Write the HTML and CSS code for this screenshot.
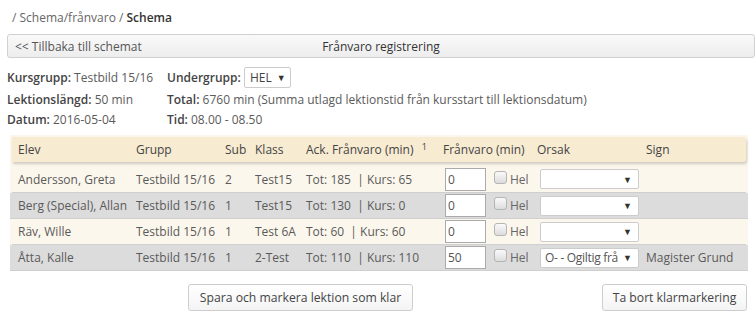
FILE: index.html
```html
<!DOCTYPE html>
<html lang="sv">
<head>
<meta charset="utf-8">
<link rel="stylesheet" href="styles.css">
</head>
<body>
<div class="crumbs">/ Schema/frånvaro / <b>Schema</b></div>
<div class="titlebar">
  <a class="back">&lt;&lt; Tillbaka till schemat</a>
  <span class="title">Frånvaro registrering</span>
</div>
<div class="info">
  <div class="col left">
    <div class="line first"><b>Kursgrupp:</b> Testbild 15/16</div>
    <div class="line"><b>Lektionslängd:</b> 50 min</div>
    <div class="line"><b>Datum:</b> 2016-05-04</div>
  </div>
  <div class="col right">
    <div class="line first"><b>Undergrupp:</b> <span class="sel small">HEL <i class="arr">▼</i></span></div>
    <div class="line"><b>Total:</b> 6760 min (Summa utlagd lektionstid från kursstart till lektionsdatum)</div>
    <div class="line"><b>Tid:</b> 08.00 - 08.50</div>
  </div>
</div>
<div class="grid">
  <div class="row head">
    <div class="c c1">Elev</div>
    <div class="c">Grupp</div>
    <div class="c">Sub</div>
    <div class="c">Klass</div>
    <div class="c">Ack. Frånvaro (min) <span class="sup">1</span></div>
    <div class="c">Frånvaro (min)</div>
    <div class="c">Orsak</div>
    <div class="c c8">Sign</div>
  </div>
  <div class="row r1">
    <div class="c c1">Andersson, Greta</div>
    <div class="c">Testbild 15/16</div>
    <div class="c">2</div>
    <div class="c">Test15</div>
    <div class="c">Tot: 185 &nbsp;| Kurs: 65</div>
    <div class="c fv"><span class="inp">0</span><span class="cb"></span><span class="hel">Hel</span></div>
    <div class="c"><span class="sel orsak"><span class="txt"></span><i class="arr">▼</i></span></div>
    <div class="c c8"></div>
  </div>
  <div class="row gray">
    <div class="c c1">Berg (Special), Allan</div>
    <div class="c">Testbild 15/16</div>
    <div class="c">1</div>
    <div class="c">Test15</div>
    <div class="c">Tot: 130 &nbsp;| Kurs: 0</div>
    <div class="c fv"><span class="inp">0</span><span class="cb"></span><span class="hel">Hel</span></div>
    <div class="c"><span class="sel orsak"><span class="txt"></span><i class="arr">▼</i></span></div>
    <div class="c c8"></div>
  </div>
  <div class="row">
    <div class="c c1">Räv, Wille</div>
    <div class="c">Testbild 15/16</div>
    <div class="c">1</div>
    <div class="c">Test 6A</div>
    <div class="c">Tot: 60 &nbsp;| Kurs: 60</div>
    <div class="c fv"><span class="inp">0</span><span class="cb"></span><span class="hel">Hel</span></div>
    <div class="c"><span class="sel orsak"><span class="txt"></span><i class="arr">▼</i></span></div>
    <div class="c c8"></div>
  </div>
  <div class="row gray">
    <div class="c c1">Åtta, Kalle</div>
    <div class="c">Testbild 15/16</div>
    <div class="c">1</div>
    <div class="c">2-Test</div>
    <div class="c">Tot: 110 &nbsp;| Kurs: 110</div>
    <div class="c fv"><span class="inp">50</span><span class="cb"></span><span class="hel">Hel</span></div>
    <div class="c"><span class="sel orsak"><span class="txt">O- - Ogiltig frå</span><i class="arr">▼</i></span></div>
    <div class="c c8">Magister Grund</div>
  </div>
</div>
<div class="actions">
  <button class="btn b1">Spara och markera lektion som klar</button>
  <button class="btn b2">Ta bort klarmarkering</button>
</div>
</body>
</html>
```

FILE: styles.css
```css
* { box-sizing: border-box; }
html, body { margin: 0; padding: 0; background: #fff; }
body {
  font-family: "Open Sans", "Liberation Sans", sans-serif;
  font-size: 12px;
  color: #5a5a5a;
  width: 756px;
  height: 333px;
  overflow: hidden;
}
b { font-weight: 600; color: #444; }
.crumbs {
  padding: 9px 0 0 12px;
  height: 34px;
  line-height: 18px;
  color: #666;
}
.crumbs b { color: #333; }
.titlebar {
  margin-left: 7px;
  width: 748px;
  height: 24px;
  border: 1px solid #d0d0d0;
  border-radius: 3px;
  background: linear-gradient(#f9f9f9, #ededed);
  display: flex;
  align-items: center;
  padding-left: 7px;
  position: relative;
}
.back { color: #555; }
.title {
  position: absolute;
  left: 0; right: 0;
  text-align: center;
  color: #333;
  pointer-events: none;
}
.info {
  display: flex;
  padding: 8px 0 0 7px;
  height: 77px;
}
.col.left { width: 160px; }
.line { height: 21px; line-height: 21px; white-space: nowrap; }
.line.first { height: 23px; line-height: 23px; }
.line:last-child { height: 19px; line-height: 19px; }
.sel {
  display: inline-flex;
  align-items: center;
  background: #fff;
  border: 1px solid #ccc;
  border-radius: 2px;
  color: #444;
  vertical-align: middle;
}
.sel.small {
  height: 21px;
  padding: 0 4px 0 5px;
  margin-top: -2px;
  gap: 5px;
}
.arr { font-style: normal; font-size: 9px; color: #333; }
.grid {
  margin-left: 10px;
  width: 738px;
  background: #fcf7ec;
  padding: 2px 2px 0 2px;
}
.row {
  display: grid;
  grid-template-columns: 121px 89px 30px 51px 137px 94px 109px 103px;
  height: 26px;
  align-items: center;
  border-bottom: 1px solid #cfcfcf;
}
.row.head {
  height: 25px;
  background: #f7ebd2;
  border-bottom: none;
  border-radius: 0 3px 3px 0;
  box-shadow: 1px 2px 3px rgba(0,0,0,0.18);
  margin-bottom: 4px;
  color: #444;
  position: relative;
}
.row.r1 { height: 27px; }
.row.gray { background: #dcdcdc; margin: 0 -2px; padding: 0 2px; }
.c { padding-left: 3px; white-space: nowrap; overflow: hidden; }
.c1 { padding-left: 6px; }
.sup { font-size: 9px; position: relative; top: -4px; margin-left: 5px; color: #444; }
.fv { display: flex; align-items: center; padding-left: 5px; }
.inp {
  width: 41px;
  height: 23px;
  border: 1px solid #aaa;
  background: #fff;
  line-height: 21px;
  padding-left: 2px;
  color: #555;
}
.cb {
  width: 13px;
  height: 13px;
  margin-left: 8px;
  border: 1px solid #b5b5b5;
  border-radius: 3px;
  background: linear-gradient(#fafafa, #dcdcdc);
  position: relative;
  top: -2px;
}
.hel { margin-left: 3px; color: #666; }
.sel.orsak {
  width: 99px;
  height: 20px;
  margin-left: 3px;
  padding: 0 6px 0 4px;
  justify-content: space-between;
}
.orsak .txt { white-space: nowrap; color: #555; letter-spacing: -0.3px; }
.actions {
  display: flex;
  justify-content: space-between;
  padding: 13px 9px 0 188px;
}
.btn {
  font-family: "Open Sans", "Liberation Sans", sans-serif;
  font-size: 12.2px;
  color: #444;
  height: 27px;
  background: linear-gradient(#ffffff, #f4f4f4);
  border: 1px solid #cdcdcd;
  border-radius: 3px;
  padding: 0;
}
.b1 { width: 225px; }
.b2 { width: 145px; }
```
